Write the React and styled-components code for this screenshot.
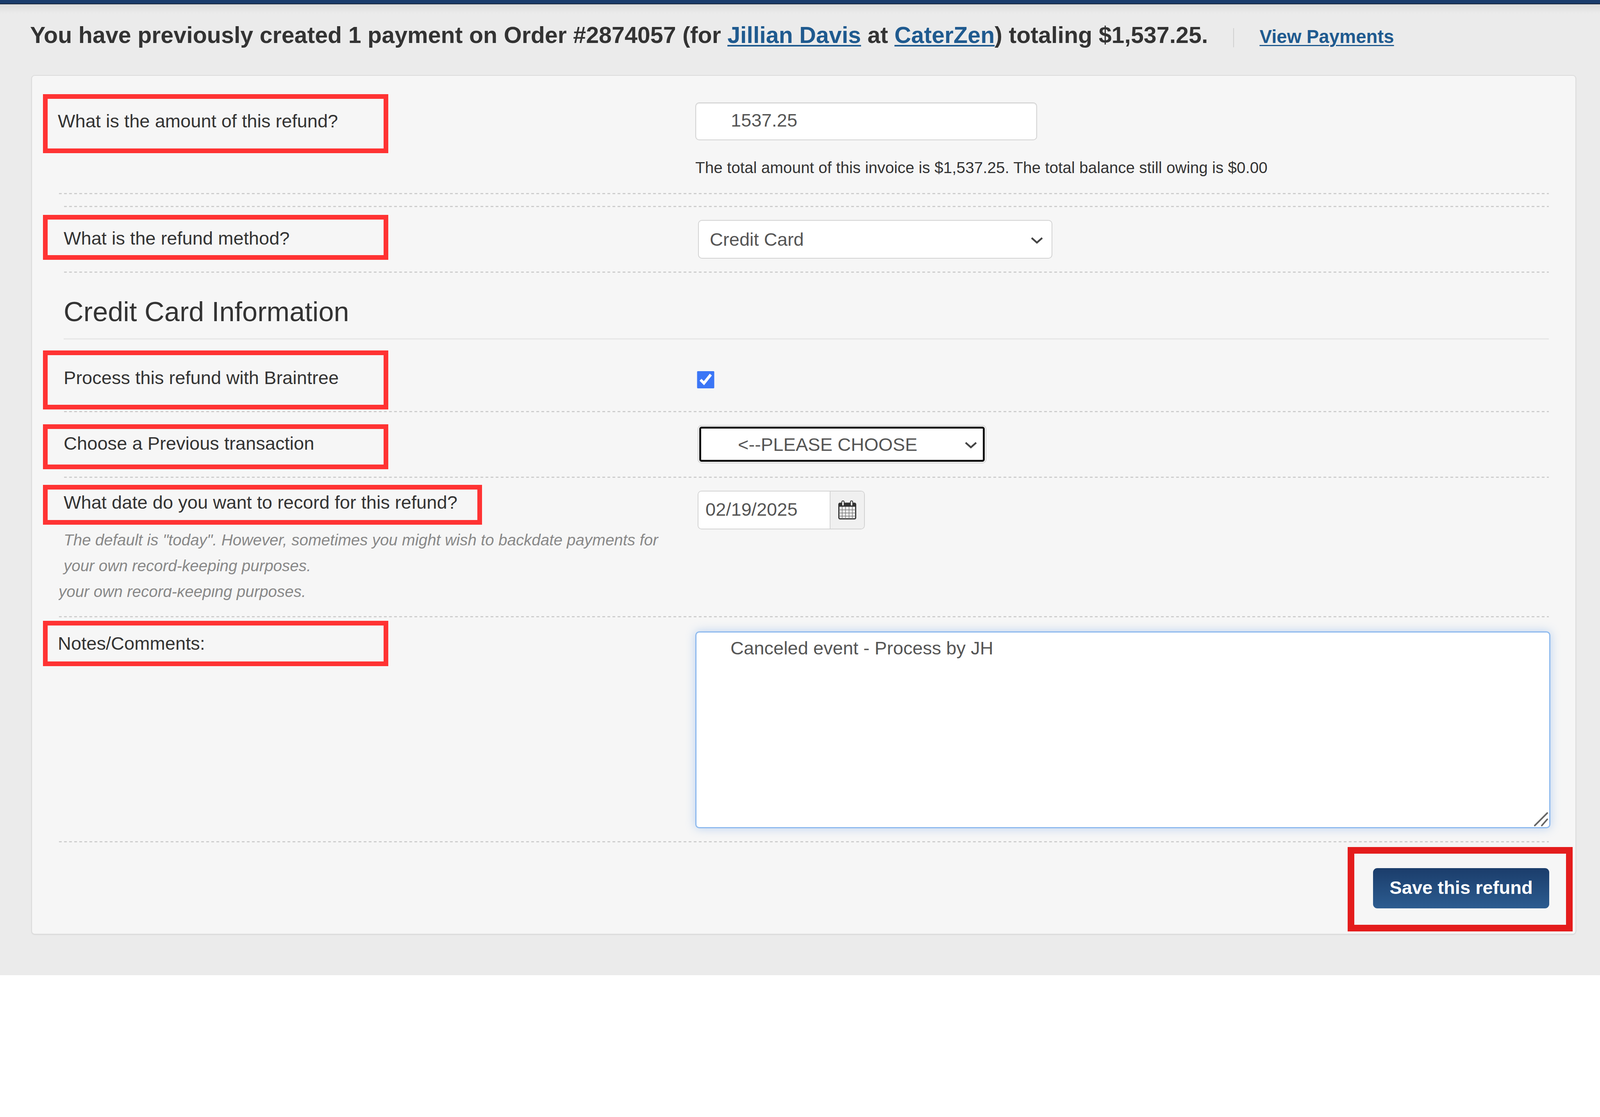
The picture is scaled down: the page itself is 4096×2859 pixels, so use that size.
import styled, { createGlobalStyle } from "styled-components";

const GlobalStyle = createGlobalStyle`
  html, body {
    margin: 0;
    padding: 0;
    background: #ffffff;
  }
  * {
    box-sizing: border-box;
  }
`;

function Chevron() {
  return (
    <ChevronIcon viewBox="0 0 33 18" fill="none">
      <path d="M3 3 L16.5 15 L30 3" stroke="#444" strokeWidth="4.5" />
    </ChevronIcon>
  );
}

function CalendarIcon() {
  return (
    <svg width="46" height="49" viewBox="0 0 46 49" fill="none">
      <rect x="1.5" y="7" width="43" height="40" rx="3" stroke="#333" strokeWidth="3" />
      <rect x="1.5" y="7" width="43" height="9" fill="#333" />
      <rect x="9" y="1" width="6" height="13" rx="3" fill="#f0f0f0" stroke="#333" strokeWidth="2" />
      <rect x="31" y="1" width="6" height="13" rx="3" fill="#f0f0f0" stroke="#333" strokeWidth="2" />
      <path
        d="M10 16V47M18.5 16V47M27.5 16V47M36 16V47M2 24H44M2 32H44M2 40H44"
        stroke="#777"
        strokeWidth="1.5"
      />
    </svg>
  );
}

export default function App() {
  return (
    <Page>
      <GlobalStyle />
      <TopBar />
      <Header>
        <Title>
          You have previously created 1 payment on Order #2874057 (for{" "}
          <a href="#jillian">Jillian Davis</a> at <a href="#caterzen">CaterZen</a>) totaling
          $1,537.25.
        </Title>
        <Separator />
        <ViewLink href="#payments">View Payments</ViewLink>
      </Header>

      <Panel>
        <Row $top={47} $h={253}>
          <LabelBox $h={151} $pad={26} $textTop={33}>
            What is the amount of this refund?
          </LabelBox>
          <Control $top={21}>
            <AmountInput defaultValue="1537.25" readOnly />
            <HelpText>
              The total amount of this invoice is $1,537.25. The total balance still owing is $0.00
            </HelpText>
          </Control>
        </Row>
        <Rule $left={41} />
        <Rule $left={54} $top={30} />

        <Row $top={20} $h={145}>
          <LabelBox $h={115} $pad={41} $textTop={24}>
            What is the refund method?
          </LabelBox>
          <Control $top={13} $left={7}>
            <SelectBox $w={907} $h={99} $pad={28}>
              Credit Card
              <Chevron />
            </SelectBox>
          </Control>
        </Row>
        <Rule $left={54} />

        <SectionHeading>Credit Card Information</SectionHeading>

        <Row $top={28} $h={155}>
          <LabelBox $h={151} $pad={41} $textTop={34}>
            Process this refund with Braintree
          </LabelBox>
          <Control $top={53} $left={4}>
            <Check type="checkbox" defaultChecked />
          </Control>
        </Row>
        <Rule $left={54} />

        <Row $top={31} $h={134}>
          <LabelBox $h={115} $pad={41} $textTop={13}>
            Choose a Previous transaction
          </LabelBox>
          <Control $top={2} $left={6}>
            <SelectBox $w={739} $h={98} $pad={101} $focused>
              {"<--PLEASE CHOOSE"}
              <Chevron />
            </SelectBox>
          </Control>
        </Row>
        <Rule $left={54} />

        <Row $top={18} $h={336}>
          <div>
            <LabelBox $w={1124} $h={102} $pad={41} $textTop={9}>
              What date do you want to record for this refund?
            </LabelBox>
            <DateHint $left={53} $first>
              The default is "today". However, sometimes you might wish to backdate payments for
            </DateHint>
            <DateHint $left={53}>your own record-keeping purposes.</DateHint>
            <DateHint $left={40} $clipped>
              your own record-keeping purposes.
            </DateHint>
          </div>
          <Control $top={15} $left={6}>
            <DateGroup>
              <DateInput defaultValue="02/19/2025" readOnly />
              <DateAddon>
                <CalendarIcon />
              </DateAddon>
            </DateGroup>
          </Control>
        </Row>
        <Rule $left={41} />

        <Row $top={9} $h={564}>
          <LabelBox $h={116} $pad={26} $textTop={22}>
            Notes/Comments:
          </LabelBox>
          <Control $top={27}>
            <NotesBox>
              Canceled event - Process by JH
              <ResizeGrip viewBox="0 0 36 36" fill="none">
                <path d="M2 34L34 2M20 34L34 18" stroke="#666" strokeWidth="4" strokeLinecap="round" />
              </ResizeGrip>
            </NotesBox>
          </Control>
        </Row>
        <Rule $left={41} />

        <Footer>
          <SaveFrame>
            <SaveButton>Save this refund</SaveButton>
          </SaveFrame>
        </Footer>
      </Panel>
    </Page>
  );
}

/* ---------------- styled ---------------- */
const Page = styled.div`
  width: 4096px;
  height: 2496px;
  background: #ebebeb;
  font-family: "Liberation Sans", Arial, sans-serif;
  font-size: 47.1px;
  color: #333;
  overflow: hidden;
`;

const TopBar = styled.div`
  height: 11px;
  background: #1a3c6c;
  border-bottom: 2px solid #16243a;
`;

const Header = styled.div`
  height: 181px;
  padding: 49px 0 0 77px;
  display: flex;
  align-items: baseline;
  background: linear-gradient(#dcdcdc 0, #ebebeb 24px);
`;

const Title = styled.div`
  font-size: 59.2px;
  line-height: 60px;
  font-weight: 700;
  color: #333;
  white-space: nowrap;

  a {
    color: #1f5a8f;
    text-decoration: underline;
    text-decoration-thickness: 4px;
    text-underline-offset: 5px;
  }
`;

const Separator = styled.span`
  align-self: flex-start;
  width: 2px;
  height: 49px;
  margin: 12px 0 0 65px;
  background: #cfcfcf;
`;

const ViewLink = styled.a`
  margin-left: 65px;
  font-size: 47.4px;
  font-weight: 700;
  color: #1f5a8f;
  white-space: nowrap;
  text-decoration: underline;
  text-decoration-thickness: 3px;
  text-underline-offset: 5px;
`;

const Panel = styled.div`
  width: 3955px;
  height: 2200px;
  margin-left: 80px;
  padding: 0 7px 0 28px;
  background: #f6f6f6;
  border: 2px solid #dcdcdc;
  border-radius: 9px;
  box-shadow: 0 1px 2px rgba(0, 0, 0, 0.08);
`;

const Row = styled.div`
  display: grid;
  grid-template-columns: 1670px 1fr;
  height: ${(p) => p.$h}px;
  margin-top: ${(p) => p.$top}px;
`;

const Rule = styled.div`
  height: 3px;
  margin-left: ${(p) => p.$left}px;
  margin-top: ${(p) => p.$top || 0}px;
  width: ${(p) => 3855 - p.$left}px;
  background: repeating-linear-gradient(90deg, #cdcdcd 0 7px, transparent 7px 13px);
`;

const LabelBox = styled.div`
  width: ${(p) => p.$w || 884}px;
  height: ${(p) => p.$h}px;
  border: 12px solid #ff3333;
  padding: ${(p) => p.$textTop}px 0 0 ${(p) => p.$pad}px;
  line-height: 48px;
  color: #333;
  white-space: nowrap;
`;

const Control = styled.div`
  padding-top: ${(p) => p.$top}px;
  padding-left: ${(p) => p.$left || 0}px;
`;

const AmountInput = styled.input`
  display: block;
  width: 875px;
  height: 97px;
  padding: 0 0 6px 89px;
  font: inherit;
  color: #555;
  background: #fff;
  border: 2px solid #d2d2d2;
  border-radius: 10px;
  box-shadow: inset 0 2px 2px rgba(0, 0, 0, 0.08);
  outline: none;
`;

const HelpText = styled.div`
  margin-top: 52px;
  font-size: 40.5px;
  line-height: 36px;
  color: #333;
  white-space: nowrap;
`;

const SelectBox = styled.div`
  position: relative;
  width: ${(p) => p.$w}px;
  height: ${(p) => p.$h}px;
  padding-left: ${(p) => p.$pad}px;
  display: flex;
  align-items: center;
  color: #555;
  background: #fff;
  border: 2px solid #d2d2d2;
  border-radius: 10px;
  white-space: nowrap;
  outline: ${(p) => (p.$focused ? "5px solid #111" : "none")};
  outline-offset: -9px;
`;

const ChevronIcon = styled.svg`
  position: absolute;
  right: 21px;
  top: 50%;
  width: 33px;
  height: 18px;
  margin-top: -7px;
`;

const SectionHeading = styled.h2`
  height: 171px;
  margin: 0 0 0 53px;
  width: 3802px;
  padding-top: 65px;
  font-size: 70.3px;
  font-weight: 400;
  line-height: 70px;
  color: #333;
  border-bottom: 3px solid #e6e6e6;
`;

const Check = styled.input`
  display: block;
  width: 45px;
  height: 44px;
  margin: 0;
  accent-color: #3b76f6;
`;

const DateHint = styled.div`
  margin-top: ${(p) => (p.$first ? 6 : 0)}px;
  margin-left: ${(p) => p.$left}px;
  font-size: 40.4px;
  font-style: italic;
  line-height: 66px;
  color: #888;
  white-space: nowrap;
  clip-path: ${(p) => (p.$clipped ? "inset(24px 0 0 0)" : "none")};
`;

const DateGroup = styled.div`
  display: flex;
  width: 428px;
  height: 99px;
  background: #fff;
  border: 2px solid #d2d2d2;
  border-radius: 10px;
  overflow: hidden;
`;

const DateInput = styled.input`
  width: 336px;
  padding: 0 0 4px 18px;
  border: none;
  outline: none;
  font: inherit;
  color: #555;
  background: #fff;
`;

const DateAddon = styled.div`
  flex: 1;
  display: flex;
  align-items: center;
  justify-content: center;
  background: #f0f0f0;
  border-left: 2px solid #d2d2d2;
`;

const NotesBox = styled.div`
  position: relative;
  width: 2189px;
  height: 504px;
  padding: 16px 0 0 87px;
  line-height: 48px;
  color: #555;
  background: #fff;
  border: 3px solid #8db9ee;
  border-radius: 10px;
  box-shadow: 0 0 24px rgba(110, 165, 235, 0.45);
`;

const ResizeGrip = styled.svg`
  position: absolute;
  right: 3px;
  bottom: 2px;
  width: 36px;
  height: 36px;
`;

const Footer = styled.div`
  display: flex;
  justify-content: flex-end;
  padding-top: 12px;
`;

const SaveFrame = styled.div`
  width: 576px;
  height: 216px;
  padding: 37px 43px 0 48px;
  border: 17px solid #e41c1c;
`;

const SaveButton = styled.button`
  display: block;
  width: 451px;
  height: 103px;
  padding: 0 0 5px;
  font: inherit;
  font-weight: 700;
  color: #fff;
  background: linear-gradient(#1b3d6b, #2c5c90);
  border: none;
  border-radius: 11px;
`;
